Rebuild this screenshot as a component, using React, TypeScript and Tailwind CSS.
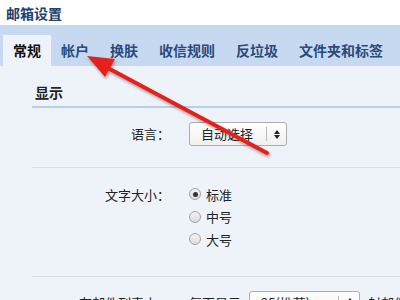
import React from 'react';

const tabs = ['常规', '帐户', '换肤', '收信规则', '反垃圾', '文件夹和标签'];

const SelectBox = ({ text, width, divider }: { text: string; width: string; divider: string }) => (
  <div
    className={`relative shrink-0 h-[24px] ${width} rounded-[3px] border border-[#adadad] bg-gradient-to-b from-white to-[#f0f0f0] flex items-center pl-[11px] text-[13px] text-[#222] whitespace-nowrap`}
  >
    <span>{text}</span>
    <div className={`absolute top-[4px] bottom-[4px] ${divider} w-px bg-[#b8b8b8]`}></div>
    <div className="absolute right-[6px] top-0 bottom-0 flex flex-col items-center justify-center gap-[1px]">
      <div className="w-0 h-0 border-l-[3px] border-r-[3px] border-b-[4px] border-l-transparent border-r-transparent border-b-[#222]"></div>
      <div className="w-0 h-0 border-l-[3px] border-r-[3px] border-t-[4px] border-l-transparent border-r-transparent border-t-[#222]"></div>
    </div>
  </div>
);

const Radio = ({ checked, label }: { checked?: boolean; label: string }) => (
  <div className="h-[22.5px] flex items-center gap-[5px]">
    <div className="w-[12px] h-[12px] rounded-full border border-[#a3a3a3] bg-gradient-to-b from-[#f4f4f4] to-[#dcdcdc] flex items-center justify-center">
      {checked && <div className="w-[5px] h-[5px] rounded-full bg-[#333]"></div>}
    </div>
    <span className="text-[13px] text-[#222]">{label}</span>
  </div>
);

export default function App() {
  return (
    <div
      className="relative w-[400px] h-[300px] overflow-hidden bg-[#eef3fa]"
      style={{ fontFamily: '"Noto Sans CJK SC", "Noto Sans", sans-serif' }}
    >
      {/* header */}
      <div className="h-[25px] bg-white flex items-center pl-[6px]">
        <span className="text-[14px] font-bold text-[#22406a] leading-none">邮箱设置</span>
      </div>

      {/* tabs */}
      <div className="h-[41px] bg-[#c6d9f1] flex items-end pl-[3px]">
        {tabs.map((t, i) => (
          <div
            key={t}
            className={`h-[31px] px-[10px] flex items-center text-[14px] font-bold ${
              i === 0 ? 'bg-[#eef3fa] text-[#111]' : 'text-[#2a4a7c] mr-[1px]'
            }`}
          >
            {t}
          </div>
        ))}
      </div>

      {/* content */}
      <div className="pl-[32px]">
        <div className="pt-[16px] pb-[4px] leading-[20px] pl-[3px] border-b-2 border-[#b7cfeb] text-[14px] font-bold text-[#222]">
          显示
        </div>

        <div className="flex items-center pt-[14px] pb-[21px] border-b border-[#d6dce4]">
          <div className="w-[140px] text-right text-[13px] text-[#222] pr-[2px]">语言：</div>
          <div className="ml-[17px]">
            <SelectBox text="自动选择" width="w-[98px]" divider="left-[76px]" />
          </div>
        </div>

        <div className="flex items-start pt-[15px] pb-[25px] border-b border-[#d6dce4]">
          <div className="w-[140px] h-[22.5px] flex items-center justify-end text-[13px] text-[#222] pr-[2px]">
            文字大小：
          </div>
          <div className="ml-[17px] flex flex-col">
            <Radio checked label="标准" />
            <Radio label="中号" />
            <Radio label="大号" />
          </div>
        </div>

        <div className="flex items-center pt-[14px] whitespace-nowrap">
          <div className="w-[140px] shrink-0 text-right text-[13px] text-[#222] pr-[2px]">在邮件列表中：</div>
          <div className="ml-[17px] shrink-0 flex items-center gap-[8px] text-[13px] text-[#222]">
            <span className="shrink-0">每页显示</span>
            <SelectBox text="25(推荐)" width="w-[111px]" divider="left-[88px]" />
            <span className="shrink-0">封邮件</span>
          </div>
        </div>
      </div>

      {/* red arrow overlay */}
      <svg className="absolute left-0 top-0 pointer-events-none" width="400" height="300" viewBox="0 0 400 300">
        <defs>
          <filter id="sh" x="-20%" y="-20%" width="140%" height="140%">
            <feDropShadow dx="1" dy="2" stdDeviation="1.5" floodColor="#000" floodOpacity="0.35" />
          </filter>
        </defs>
        <g filter="url(#sh)">
          <line x1="267" y1="153" x2="106" y2="67" stroke="#e3211b" strokeWidth="4" strokeLinecap="round" />
          <polygon points="87,56 115,59 105,77" fill="#e3211b" />
        </g>
      </svg>
    </div>
  );
}
